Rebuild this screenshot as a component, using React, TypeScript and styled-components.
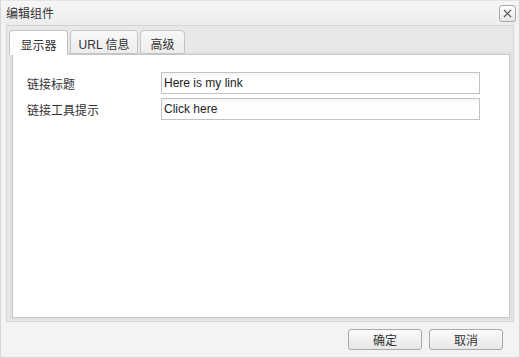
import React, { useState } from 'react';
import styled, { createGlobalStyle } from 'styled-components';

const GlobalStyle = createGlobalStyle`
  html, body {
    margin: 0;
    padding: 0;
    background: #ffffff;
  }
  body {
    font-family: 'Liberation Sans', 'Noto Sans CJK SC', sans-serif;
    font-size: 12px;
    color: #222;
  }
`;

const Dialog = styled.div`
  width: 520px;
  height: 358px;
  box-sizing: border-box;
  background: #f3f3f3;
  border: 1px solid #d6d6d6;
  border-top-color: #e4e4e4;
  display: flex;
  flex-direction: column;
`;

const TitleBar = styled.div`
  height: 24px;
  flex: none;
  display: flex;
  align-items: center;
  justify-content: space-between;
  padding: 0 3px 0 5px;
  background: linear-gradient(#f6f6f6, #ededed);
`;

const Title = styled.span`
  font-size: 12px;
  color: #333;
  line-height: 16px;
  margin-top: 1px;
`;

const CloseButton = styled.button`
  width: 17px;
  height: 17px;
  padding: 0;
  margin-top: 1px;
  box-sizing: border-box;
  border: 1px solid #a9a9a9;
  border-radius: 3px;
  background: linear-gradient(#ffffff, #e6e6e6);
  display: flex;
  align-items: center;
  justify-content: center;
  cursor: pointer;
`;

const Body = styled.div`
  flex: 1;
  margin: 0 5px;
  padding: 4px 3px 3px 2px;
  box-sizing: border-box;
  background: #e8e8e8;
  border: 1px solid #d3d3d3;
  display: flex;
  flex-direction: column;
`;

const TabStrip = styled.div`
  display: flex;
  gap: 2px;
  height: 24px;
  flex: none;
`;

const Tab = styled.button<{ $active?: boolean; $width: number }>`
  width: ${p => p.$width}px;
  height: ${p => (p.$active ? 25 : 24)}px;
  box-sizing: border-box;
  padding: 2px 0 0;
  font: inherit;
  font-size: 12px;
  color: #333;
  border: 1px solid #c4c4c4;
  border-bottom: ${p => (p.$active ? 'none' : '1px solid #c4c4c4')};
  border-radius: 4px 4px 0 0;
  background: ${p => (p.$active ? '#ffffff' : 'linear-gradient(#f8f8f8, #ececec)')};
  position: relative;
  z-index: ${p => (p.$active ? 1 : 0)};
  cursor: pointer;
`;

const Panel = styled.div`
  flex: 1;
  background: #ffffff;
  border: 1px solid #c6c6c6;
  box-shadow: 0 0 0 2px #e0e0e0;
  margin: 0 0 0 3px;
  padding: 17px 0 0 14px;
  display: flex;
  flex-direction: column;
  gap: 4px;
`;

const Row = styled.div`
  display: grid;
  grid-template-columns: 134px 319px;
  align-items: center;
`;

const Label = styled.label`
  color: #333;
  font-size: 12px;
`;

const Input = styled.input`
  height: 22px;
  box-sizing: border-box;
  border: 1px solid #c2c2c2;
  padding: 0 2px;
  font: inherit;
  font-size: 12px;
  color: #222;
  background: linear-gradient(#f4f4f4, #ffffff 6px);
  outline: none;
`;

const Footer = styled.div`
  height: 34px;
  flex: none;
  display: flex;
  justify-content: flex-end;
  align-items: center;
  gap: 7px;
  padding: 0 16px 1px 0;
`;

const Button = styled.button`
  width: 74px;
  height: 21px;
  box-sizing: border-box;
  border: 1px solid #a9a9a9;
  border-radius: 3px;
  background: linear-gradient(#fbfbfb, #e7e7e7);
  font: inherit;
  font-size: 12px;
  color: #333;
  cursor: pointer;
`;

const tabs = [
  { label: '显示器', width: 59 },
  { label: 'URL 信息', width: 68 },
  { label: '高级', width: 45 },
];

export default function App() {
  const [active, setActive] = useState(0);
  return (
    <>
      <GlobalStyle />
      <Dialog>
        <TitleBar>
          <Title>编辑组件</Title>
          <CloseButton aria-label="close">
            <svg width="9" height="9" viewBox="0 0 9 9">
              <path d="M1 1L8 8M8 1L1 8" stroke="#555" strokeWidth="1.2" />
            </svg>
          </CloseButton>
        </TitleBar>
        <Body>
          <TabStrip>
            {tabs.map((t, i) => (
              <Tab
                key={t.label}
                $width={t.width}
                $active={i === active}
                onClick={() => setActive(i)}
              >
                {t.label}
              </Tab>
            ))}
          </TabStrip>
          <Panel>
            <Row>
              <Label>链接标题</Label>
              <Input defaultValue="Here is my link" />
            </Row>
            <Row>
              <Label>链接工具提示</Label>
              <Input defaultValue="Click here" />
            </Row>
          </Panel>
        </Body>
        <Footer>
          <Button>确定</Button>
          <Button>取消</Button>
        </Footer>
      </Dialog>
    </>
  );
}
